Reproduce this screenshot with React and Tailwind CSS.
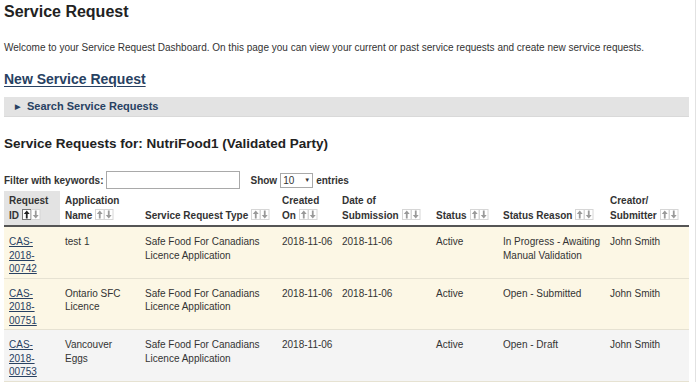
// Service request dashboard
const rows = [
  { id: ["CAS-", "2018-", "00742"], name: "test 1", type: "Safe Food For Canadians Licence Application", created: "2018-11-06", submitted: "2018-11-06", status: "Active", reason: "In Progress - Awaiting Manual Validation", creator: "John Smith", bg: "bg-[#fcf7e5]" },
  { id: ["CAS-", "2018-", "00751"], name: "Ontario SFC Licence", type: "Safe Food For Canadians Licence Application", created: "2018-11-06", submitted: "2018-11-06", status: "Active", reason: "Open - Submitted", creator: "John Smith", bg: "bg-[#fcf7e5]" },
  { id: ["CAS-", "2018-", "00753"], name: "Vancouver Eggs", type: "Safe Food For Canadians Licence Application", created: "2018-11-06", submitted: "", status: "Active", reason: "Open - Draft", creator: "John Smith", bg: "bg-[#f4f4f4]" },
];

function SortIcon({ active }) {
  return (
    <svg width="19" height="11" viewBox="0 0 19 11" className="inline-block align-[-1px] ml-[3px]">
      <rect x="0.5" y="0.5" width="8.5" height="10" fill="#fff" stroke={active ? "#777" : "#d6d6d6"} />
      <rect x="9.5" y="0.5" width="8.5" height="10" fill="#fff" stroke="#d6d6d6" />
      <path d="M4.75 1.5 L1.8 5 L7.7 5 Z M3.85 5 H5.65 V9.5 H3.85 Z" fill={active ? "#222" : "#9a9a9a"} />
      <path d="M13.75 9.5 L10.8 6 L16.7 6 Z M12.85 1.5 H14.65 V6 H12.85 Z" fill="#9a9a9a" />
    </svg>
  );
}

const headers = [
  { l1: "Request", l2: "ID", w: "w-[56px]", active: true },
  { l1: "Application", l2: "Name", w: "w-[80px]" },
  { l1: "", l2: "Service Request Type", w: "w-[137px]" },
  { l1: "Created", l2: "On", w: "w-[60px]" },
  { l1: "Date of", l2: "Submission", w: "w-[94px]" },
  { l1: "", l2: "Status", w: "w-[67px]" },
  { l1: "", l2: "Status Reason", w: "w-[107px]" },
  { l1: "Creator/", l2: "Submitter", w: "w-[84px]" },
];

export default function App() {
  return (
    <div className="flex w-[700px] h-[382px] overflow-hidden bg-white text-[#333] font-['Liberation_Sans',Arial,sans-serif]">
      <div className="w-[695px] pl-[4px] pr-[6px]">
        <h1 className="text-[16px] font-bold leading-[20px] mt-[2px] text-[#222]">Service Request</h1>
        <p className="text-[10px] leading-[13px] mt-[19px]">
          Welcome to your Service Request Dashboard. On this page you can view your current or past service requests and create new service requests.
        </p>
        <a href="#" className="block mt-[17px] text-[14px] font-bold leading-[17px] text-[#284162] underline decoration-1 underline-offset-[2px]">
          New Service Request
        </a>
        <div className="mt-[9px] h-[20px] bg-[#e3e3e3] flex items-center pl-[11px] gap-[7px] text-[11px] font-bold text-[#284162] border-b border-[#d9d9d9]">
          <span className="text-[7px] leading-none">&#9654;</span>
          <span>Search Service Requests</span>
        </div>
        <h2 className="mt-[18px] text-[13.5px] font-bold leading-[17px] text-[#222]">
          Service Requests for: NutriFood1 (Validated Party)
        </h2>
        <div className="mt-[19px] flex items-center text-[10px] font-bold h-[18px]">
          <span>Filter with keywords:</span>
          <input className="ml-[3px] w-[134px] h-[18px] border border-[#a9a9a9] bg-white" />
          <span className="ml-[10px]">Show</span>
          <span className="ml-[3px] w-[33px] h-[15px] border border-[#a9a9a9] bg-white font-normal flex items-center justify-between px-[2px] text-[10px]">
            <span>10</span>
            <span className="text-[6px]">&#9660;</span>
          </span>
          <span className="ml-[3px]">entries</span>
        </div>
        <table className="mt-[2px] w-[685px] table-fixed border-collapse text-[10px]">
          <thead>
            <tr className="border-b-2 border-[#555]">
              {headers.map((h, i) => (
                <th key={i} className={`${h.w} ${h.active ? "bg-[#e3e3e3]" : ""} text-left align-bottom font-bold leading-[15px] pl-[5px] pr-[2px] pt-[2px] pb-[2px]`}>
                  {h.l1 && <div>{h.l1}</div>}
                  <div className="whitespace-nowrap">
                    {h.l2}
                    <SortIcon active={h.active} />
                  </div>
                </th>
              ))}
            </tr>
          </thead>
          <tbody>
            {rows.map((r, i) => (
              <tr key={i} className={`${r.bg} border-b border-[#e6e2d2] h-[50px]`}>
                <td className="align-top pl-[5px] pt-[8px] pb-[2px] leading-[13.5px]">
                  <a href="#" className="text-[#284162] underline">
                    {r.id.map((p, j) => (
                      <div key={j}>{p}</div>
                    ))}
                  </a>
                </td>
                <td className="align-top pl-[5px] pr-[4px] pt-[8px] leading-[13.5px]">{r.name}</td>
                <td className="align-top pl-[5px] pr-[4px] pt-[8px] leading-[13.5px]">{r.type}</td>
                <td className="align-top pl-[5px] pt-[8px] leading-[13.5px]">{r.created}</td>
                <td className="align-top pl-[5px] pt-[8px] leading-[13.5px]">{r.submitted}</td>
                <td className="align-top pl-[5px] pt-[8px] leading-[13.5px]">{r.status}</td>
                <td className="align-top pl-[5px] pr-[2px] pt-[8px] leading-[13.5px]">{r.reason}</td>
                <td className="align-top pl-[5px] pt-[8px] leading-[13.5px]">{r.creator}</td>
              </tr>
            ))}
          </tbody>
        </table>
      </div>
      <div className="w-[5px] border-l border-[#e2e2e2] bg-white" />
    </div>
  );
}
